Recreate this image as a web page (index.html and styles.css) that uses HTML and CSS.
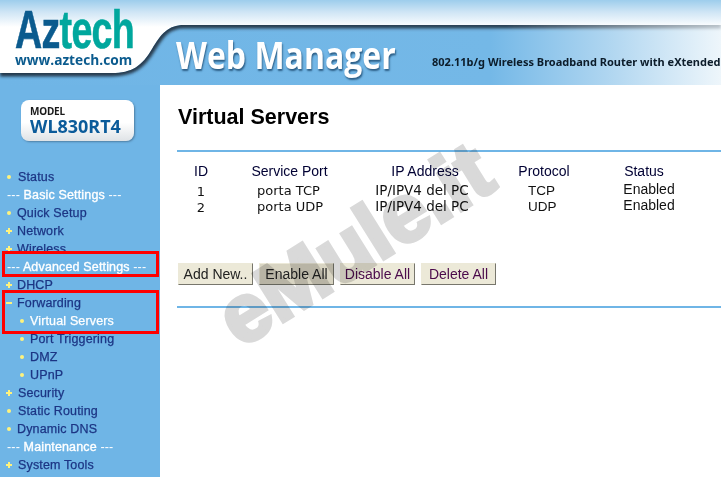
FILE: index.html
```html
<!DOCTYPE html>
<html lang="en">
<head>
<meta charset="utf-8">
<title>Virtual Servers</title>
<link rel="stylesheet" href="styles.css">
</head>
<body>
<div class="page">
  <header class="header">
    <svg class="header-art" width="721" height="85" viewBox="0 0 721 85" aria-hidden="true">
      <defs>
        <linearGradient id="band" x1="0" x2="1" y1="0" y2="0">
          <stop offset="0" stop-color="#6fb5e6"/>
          <stop offset="0.68" stop-color="#74b8e7"/>
          <stop offset="0.84" stop-color="#aed5f0"/>
          <stop offset="1" stop-color="#eef6fb"/>
        </linearGradient>
        <linearGradient id="edge" x1="0" x2="721" y1="0" y2="0" gradientUnits="userSpaceOnUse">
          <stop offset="0" stop-color="#24394c"/>
          <stop offset="0.7" stop-color="#2a4053"/>
          <stop offset="1" stop-color="#b9c2c9"/>
        </linearGradient>
        <clipPath id="bandClip">
          <path d="M721 25H184C168 25 161 34 152 49C142 66 132 73 112 73H0V85H721Z"/>
        </clipPath>
        <filter id="soft" x="-5%" y="-20%" width="110%" height="140%">
          <feGaussianBlur stdDeviation="1.6"/>
        </filter>
      </defs>
      <path d="M721 25H184C168 25 161 34 152 49C142 66 132 73 112 73H0V85H721Z" fill="url(#band)"/>
      <g clip-path="url(#bandClip)">
        <path d="M721 25H184C168 25 161 34 152 49C142 66 132 73 112 73H0" fill="none" stroke="url(#edge)" stroke-width="7" filter="url(#soft)"/>
      </g>
    </svg>
    <div class="logo">
      <div class="logo-name"><span class="logo-az">Az</span><span class="logo-tech">tech</span></div>
      <div class="logo-url">www.aztech.com</div>
    </div>
    <div class="product">Web Manager</div>
    <div class="tagline">802.11b/g Wireless Broadband Router with eXtended</div>
  </header>
  <div class="content">
    <aside class="sidebar">
      <div class="model">
        <div class="model-label">MODEL</div>
        <div class="model-name">WL830RT4</div>
      </div>
      <nav class="menu">
        <div class="row row-wide"><span class="dot"></span>Status</div>
        <div class="row section"><span class="dash">---</span> Basic Settings <span class="dash">---</span></div>
        <div class="row"><span class="dot"></span>Quick Setup</div>
        <div class="row"><span class="plus"></span>Network</div>
        <div class="row"><span class="plus"></span>Wireless</div>
        <div class="row section"><span class="dash">---</span> Advanced Settings <span class="dash">---</span></div>
        <div class="row"><span class="plus"></span>DHCP</div>
        <div class="row"><span class="minus"></span>Forwarding</div>
        <div class="row sub current"><span class="dot"></span>Virtual Servers</div>
        <div class="row sub"><span class="dot"></span>Port Triggering</div>
        <div class="row sub"><span class="dot"></span>DMZ</div>
        <div class="row sub"><span class="dot"></span>UPnP</div>
        <div class="row row-wide"><span class="plus"></span>Security</div>
        <div class="row row-wide"><span class="dot"></span>Static Routing</div>
        <div class="row"><span class="dot"></span>Dynamic DNS</div>
        <div class="row section"><span class="dash">---</span> Maintenance <span class="dash">---</span></div>
        <div class="row row-wide"><span class="plus"></span>System Tools</div>
      </nav>
      <div class="mark mark-advanced"></div>
      <div class="mark mark-forwarding"></div>
    </aside>
    <main class="main">
      <h1 class="title">Virtual Servers</h1>
      <hr class="rule">
      <div class="table">
        <div class="th">ID</div>
        <div class="th">Service Port</div>
        <div class="th">IP Address</div>
        <div class="th">Protocol</div>
        <div class="th">Status</div>
        <div class="td c-id">1</div>
        <div class="td c-port">porta TCP</div>
        <div class="td c-ip">IP/IPV4 del PC</div>
        <div class="td c-proto">TCP</div>
        <div class="td c-status">Enabled</div>
        <div class="td c-id">2</div>
        <div class="td c-port">porta UDP</div>
        <div class="td c-ip">IP/IPV4 del PC</div>
        <div class="td c-proto">UDP</div>
        <div class="td c-status">Enabled</div>
      </div>
      <div class="buttons">
        <button class="btn btn-plain">Add New..</button>
        <button class="btn btn-pressed">Enable All</button>
        <button class="btn">Disable All</button>
        <button class="btn">Delete All</button>
      </div>
      <hr class="rule">
    </main>
  </div>
  <div class="watermark">eMule.it</div>
</div>
</body>
</html>
```
FILE: styles.css
```css
* { box-sizing: border-box; }
html, body { margin: 0; padding: 0; }
body { background: #fff; font-family: "Liberation Sans", Arial, sans-serif; }
.page { position: relative; width: 721px; height: 477px; overflow: hidden; }

.header {
  position: relative;
  height: 85px;
  background: linear-gradient(#9dcdec 0, #cfe5f5 12px, #ffffff 27px, #ffffff 85px);
}
.header-art { position: absolute; left: 0; top: 0; }
.logo { position: absolute; left: 15px; top: 8px; width: 120px; }
.logo-name {
  font-family: "Liberation Sans", Arial, sans-serif;
  font-weight: 700;
  font-size: 53px;
  line-height: 44px;
  letter-spacing: -1px;
  -webkit-text-stroke: 0.6px currentColor;
  white-space: nowrap;
  transform: scaleX(0.71);
  transform-origin: 0 0;
}
.logo-az { color: #0b5b8e; }
.logo-tech { color: #00a79d; }
.logo-url {
  font-family: "Open Sans", sans-serif;
  font-weight: 700;
  font-size: 14px;
  line-height: 16px;
  color: #0b5b8e;
  white-space: nowrap;
  transform: scaleX(0.98);
  transform-origin: 0 0;
}
.product {
  position: absolute;
  left: 176px;
  top: 32px;
  font-family: "Open Sans", sans-serif;
  font-weight: 700;
  font-size: 37px;
  line-height: 46px;
  color: #fff;
  white-space: nowrap;
  text-shadow: 1px 2px 2px #2d5f87;
  transform: scaleX(0.865);
  transform-origin: 0 0;
}
.tagline {
  position: absolute;
  left: 432px;
  top: 54px;
  font-family: "Noto Sans", sans-serif;
  font-weight: 700;
  font-size: 11px;
  line-height: 16px;
  color: #0c1c2a;
  white-space: nowrap;
}

.content { display: flex; height: 392px; }
.sidebar { position: relative; width: 160px; flex: none; background: #6fb5e6; }
.model {
  width: 113px;
  height: 41px;
  margin: 15px 0 0 21px;
  padding: 6px 0 0 9px;
  border-radius: 8px;
  background: linear-gradient(#fff 55%, #dfe3e6);
  box-shadow: 1px 1px 2px #4e7ea3;
}
.model-label { font: 700 10px/11px "Noto Sans", sans-serif; color: #1a1a1a; letter-spacing: -0.2px; }
.model-name { font: 700 18px/19px "Noto Sans", sans-serif; color: #0b5b9a; white-space: nowrap; }

.menu { margin-top: 27px; }
.row {
  display: flex;
  align-items: center;
  height: 18px;
  padding-left: 6px;
  font-size: 12.5px;
  letter-spacing: 0.15px;
  -webkit-text-stroke: 0.25px currentColor;
  color: #1c3584;
  white-space: nowrap;
}
.row > span:first-child { flex: none; margin-right: 5px; }
.row-wide > span:first-child { margin-right: 6px; }
.section { padding-left: 7px; color: #fff; white-space: pre; -webkit-text-stroke: 0.35px currentColor; }
.section > .dash:first-child { margin-right: 0; }
.dash { -webkit-text-stroke: 0; }
.sub { padding-left: 20px; }
.sub > span:first-child { margin-right: 6px; }
.current { color: #fff; }
.dot { width: 4px; height: 4px; border-radius: 50%; background: #fff27c; }
.row:not(.sub) > .dot { margin-left: 1px; margin-right: 6px; }
.row-wide:not(.sub) > .dot { margin-right: 7px; }
.plus, .minus { position: relative; width: 6px; height: 6px; }
.plus { background: linear-gradient(#fff27c, #fff27c) center / 2px 6px no-repeat, linear-gradient(#fff27c, #fff27c) center / 6px 2px no-repeat; }
.minus { background: linear-gradient(#fff27c, #fff27c) center / 6px 2px no-repeat; }

.mark { position: absolute; left: 2px; width: 157px; border: 3px solid #fe0000; }
.mark-advanced { top: 166px; height: 26px; }
.mark-forwarding { top: 205px; height: 44px; }

.main { flex: 1; min-width: 0; padding-left: 17px; }
.title {
  margin: 19px 0 0 1px;
  font-size: 21.5px;
  line-height: 26px;
  font-weight: 700;
  color: #000;
}
.rule { height: 2px; margin: 20px 0 0; border: 0; background: #6fb5e6; }
.table {
  display: grid;
  grid-template-columns: 46px 131px 140px 98px 102px;
  grid-template-rows: 21px 16px 16px;
  margin: 11px 0 0 1px;
  color: #111;
  text-align: center;
}
.th { font-size: 14px; line-height: 16px; color: #000033; }
.td { font-family: "DejaVu Sans", sans-serif; font-size: 13px; line-height: 15px; white-space: nowrap; }
.c-port { margin-top: -1px; padding-left: 33px; text-align: left; }
.c-ip { margin-top: -1px; padding-right: 6px; font-size: 13.5px; }
.c-proto { font-family: "Liberation Sans", sans-serif; font-size: 13.5px; padding-left: 33px; text-align: left; margin-top: -1px; }
.c-status { font-family: "Liberation Sans", sans-serif; font-size: 14px; padding-left: 10px; margin-top: -2px; }
.buttons { display: flex; gap: 6px; margin: 47px 0 0 1px; }
.btn {
  width: 75px;
  height: 22px;
  padding: 0;
  border: 1px solid #ece9d8;
  border-right-color: #77766c;
  border-bottom-color: #77766c;
  background: #ece9d8;
  font-family: "Liberation Sans", sans-serif;
  font-size: 14px;
  color: #4b0a4b;
}
.btn-plain { color: #222; }
.btn-pressed { color: #222; background: #d8d4c2; }
.buttons + .rule { margin-top: 21px; }

.watermark {
  position: absolute;
  left: 202px;
  top: 203px;
  font-weight: 700;
  font-size: 82px;
  line-height: 82px;
  color: #d9d9d9;
  -webkit-text-stroke: 4px #d9d9d9;
  mix-blend-mode: multiply;
  transform: rotate(-32deg);
  white-space: nowrap;
  pointer-events: none;
}
```
